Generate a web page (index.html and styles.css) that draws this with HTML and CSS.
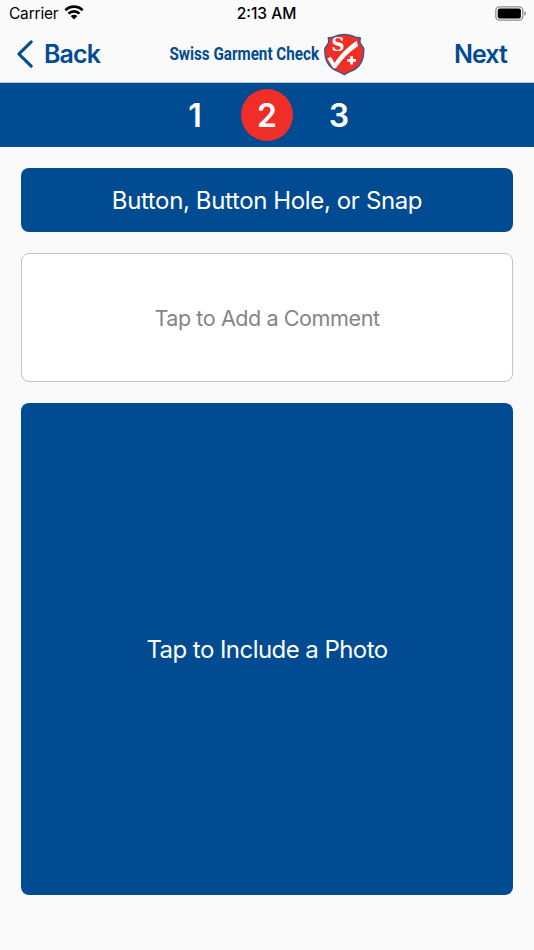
FILE: index.html
```html
<!DOCTYPE html>
<html lang="en">
  <head>
    <meta charset="UTF-8" />
    <meta name="viewport" content="width=device-width, initial-scale=1.0" />
    <title>Swiss Garment Check</title>
    <link rel="stylesheet" href="styles.css">
  </head>
  <body>
    <div class="status-bar">
      <div class="carrier">
        <span>Carrier</span>
        <svg class="wifi" width="20" height="15" viewBox="0 0 20 15">
          <path d="M1.4 5.2a12.2 12.2 0 0 1 17.2 0M4.5 8.6a7.8 7.8 0 0 1 11 0" fill="none" stroke="#000" stroke-width="2.7" />
          <path d="M6.7 11.1a4.7 4.7 0 0 1 6.6 0L10 14.4z" />
        </svg>
      </div>
      <span class="time">2:13 AM</span>
      <svg class="battery" width="32" height="16" viewBox="0 0 32 16">
        <rect x="0.8" y="0.8" width="27" height="13.4" rx="3.7" fill="none" stroke="#8e8e8e" stroke-width="1.3" />
        <rect x="2.7" y="2.6" width="23.2" height="9.8" rx="2" />
        <path d="M29.3 5.1q1.8 1 1.8 2.4t-1.8 2.4z" fill="#8e8e8e" />
      </svg>
    </div>

    <header class="nav-bar">
      <a class="nav-link back">
        <svg width="18" height="30" viewBox="0 0 18 30">
          <path d="M15.2 2.8 2.9 15l12.3 12.2" fill="none" stroke="#004b91" stroke-width="3.1" stroke-linecap="round" stroke-linejoin="round" />
        </svg>
        <span>Back</span>
      </a>
      <svg class="logo" width="196" height="44" viewBox="0 0 196 44">
        <text class="logo-text" x="0.5" y="28.5" transform="scale(0.88 1)" textLength="170" lengthAdjust="spacingAndGlyphs">Swiss Garment Check</text>
        <!-- shield -->
        <path d="M175.3 2.4c4.6 0 8.2 1 11.2 2.7l4.8.8-.4 4.4c.8 2.4 2.8 4.2 3.9 6.2.4 8.6-2.4 16.3-8.2 20.4-3.6 2.3-7.6 3.2-11.3 5.8-3.7-2.6-7.7-3.5-11.3-5.8-5.8-4.1-8.6-11.8-8.2-20.4 1.1-2 3.1-3.8 3.9-6.2l-.4-4.4 4.8-.8c3-1.7 6.6-2.7 11.2-2.7z" fill="#ee2e27" stroke="#235a99" stroke-width="1.3" />
        <path d="M158.4 26.6l3.4-1.8 3.8 6.1c5.8-8.8 12.6-15.4 22.1-22.2l1.3 5.2c-8.8 6.2-16.2 13.2-22.2 22.4h-2.5z" fill="#fff" />
        <path d="M181.2 24.2h2.8v2.7h2.9v2.8H184v2.8h-2.8v-2.8h-2.9v-2.8h2.9z" fill="#fff" />
        <text class="logo-s" x="162.5" y="19.4">S</text>
      </svg>
      <a class="nav-link next">Next</a>
    </header>

    <nav class="steps">
      <span class="step">1</span>
      <span class="step active">2</span>
      <span class="step">3</span>
    </nav>

    <main class="content">
      <div class="category"><span>Button, Button Hole, or Snap</span></div>
      <div class="comment"><span>Tap to Add a Comment</span></div>
      <div class="photo"><span>Tap to Include a Photo</span></div>
    </main>
  </body>
</html>
```

FILE: styles.css
```css
* {
  box-sizing: border-box;
}

body {
  margin: 0;
  height: 950px;
  overflow: hidden;
  background-color: #fafafa;
  font-family: Inter, "Liberation Sans", sans-serif;
}

.status-bar {
  display: grid;
  grid-template-columns: 1fr auto 1fr;
  align-items: center;
  height: 27px;
  padding: 0 7px 0 9px;
  font-size: 15.5px;
}

.carrier {
  display: flex;
  align-items: center;
  gap: 6px;
  letter-spacing: -0.2px;
}

.wifi {
  margin-top: -2px;
}

.time {
  margin-left: -3px;
  font-weight: 500;
}

.battery {
  justify-self: end;
}

.nav-bar {
  display: flex;
  justify-content: space-between;
  align-items: center;
  height: 56px;
  padding: 0 27px 2px 16px;
  border-bottom: 1px solid #b9c5d0;
}

.nav-link {
  width: 92px;
  color: #004b91;
  font-size: 25px;
  font-weight: 600;
  letter-spacing: -0.9px;
}

.back {
  display: flex;
  align-items: center;
  gap: 10px;
}

.next {
  text-align: right;
}

.logo {
  margin-left: 11px;
}

.logo-text {
  fill: #004b91;
  font-family: Roboto, sans-serif;
  font-size: 18px;
  font-weight: 700;
}

.logo-s {
  fill: #fff;
  font-family: "DejaVu Serif", serif;
  font-size: 18px;
  font-weight: 700;
}

.steps {
  display: flex;
  justify-content: center;
  align-items: center;
  gap: 20px;
  height: 64px;
  background-color: #004b91;
}

.step {
  width: 52px;
  height: 52px;
  border-radius: 50%;
  color: #fff;
  font-size: 32px;
  font-weight: 600;
  line-height: 53px;
  text-align: center;
}

.active {
  background-color: #ee2e27;
}

.content {
  display: flex;
  flex-direction: column;
  gap: 21px;
  padding: 21px 21px 0;
}

.category,
.comment,
.photo {
  display: flex;
  justify-content: center;
  align-items: center;
  border-radius: 8px;
}

.category,
.photo {
  background-color: #004b91;
  color: #fff;
  font-size: 24px;
}

.category {
  height: 64px;
  letter-spacing: -0.37px;
}

.comment {
  height: 129px;
  border: 1px solid #c4c4c4;
  background-color: #fff;
  color: #858585;
  font-size: 21.6px;
  letter-spacing: -0.45px;
}

.photo {
  height: 492px;
  letter-spacing: -0.55px;
}
```
